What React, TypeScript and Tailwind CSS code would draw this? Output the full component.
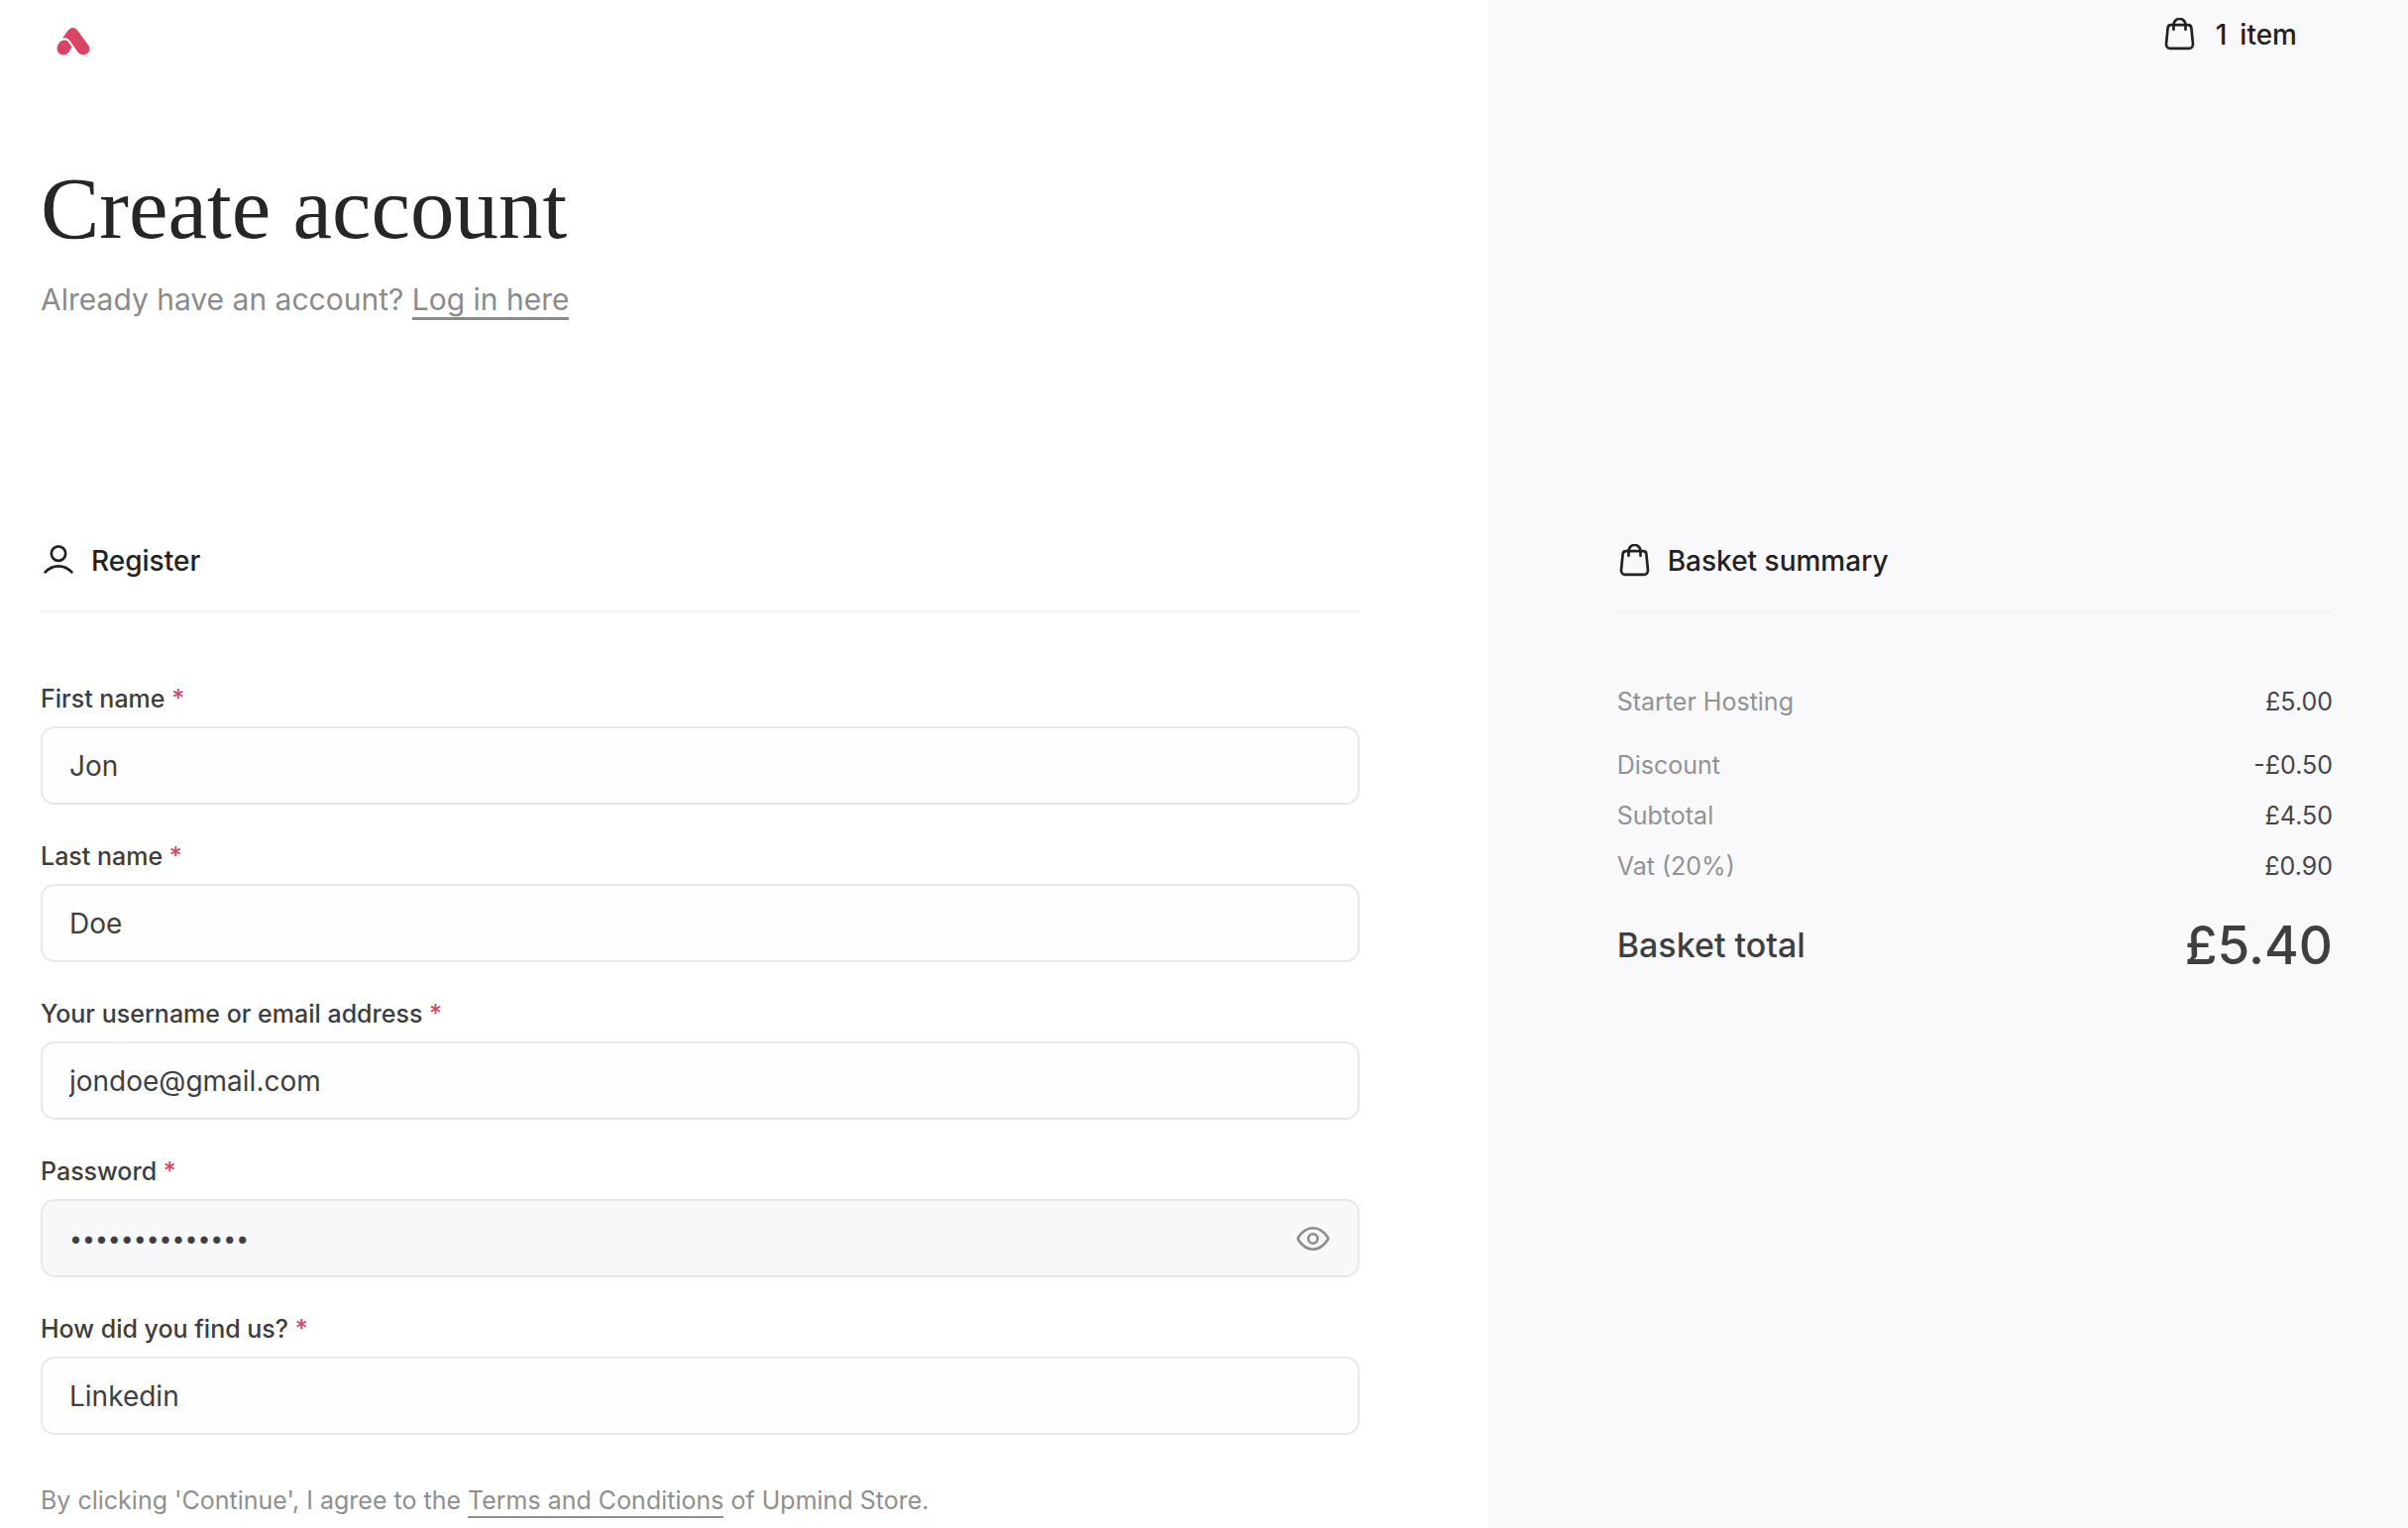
import { useState } from "react";

const fields = [
  { id: "firstName", label: "First name", type: "text", value: "Jon" },
  { id: "lastName", label: "Last name", type: "text", value: "Doe" },
  {
    id: "email",
    label: "Your username or email address",
    type: "email",
    value: "jondoe@gmail.com",
  },
  {
    id: "password",
    label: "Password",
    type: "password",
    value: "jondoe12345678",
  },
  { id: "source", label: "How did you find us?", type: "text", value: "Linkedin" },
];

const lines = [
  { label: "Discount", amount: "-£0.50" },
  { label: "Subtotal", amount: "£4.50" },
  { label: "Vat (20%)", amount: "£0.90" },
];

function Logo() {
  return (
    <svg className="w-[34px] h-[28px]" viewBox="0 0 34 28" fill="#db4565">
      <path d="M6 10.600 11.200 3.200Q16.500-3 21.800 3.200L32.600 18.200Q34.800 22 32 25.200 27 29.500 22 25.200L14.600 14.400Q11.400 9.400 6 10.600Z" />
      <path d="M1.400 17.600C3.600 12.200 10 10.800 12.600 15.200L15.600 19.600 12 25.200Q7 29.600 2.200 25.400-.6 22 1.400 17.600Z" />
    </svg>
  );
}

function BagIcon() {
  return (
    <svg
      className="w-[34px] h-[34px]"
      viewBox="0 0 34 34"
      fill="none"
      stroke="currentColor"
      strokeWidth="2.7"
      strokeLinecap="round"
      strokeLinejoin="round"
    >
      <path d="M9 7.200h17a3.400 3.400 0 0 1 3.400 3.100l1.600 16.200a4 4 0 0 1-4 4.400H8a4 4 0 0 1-4-4.400l1.600-16.200A3.400 3.400 0 0 1 9 7.200Z" />
      <path d="M11.500 11.800V7a6 6 0 0 1 12 0v4.800" />
    </svg>
  );
}

function UserIcon() {
  return (
    <svg
      className="w-[34px] h-[34px]"
      viewBox="0 0 34 34"
      fill="none"
      stroke="currentColor"
      strokeWidth="2.7"
      strokeLinecap="round"
    >
      <circle cx="18" cy="9.600" r="7.200" />
      <path d="M4.600 28.400C8.200 24.600 12.800 22.400 18 22.400s9.800 2.200 13.400 6" />
    </svg>
  );
}

function EyeIcon() {
  return (
    <svg
      className="w-[34px] h-[34px]"
      viewBox="0 0 34 34"
      fill="none"
      stroke="currentColor"
      strokeWidth="2.6"
      strokeLinejoin="round"
    >
      <path d="M2.200 15.800C6 10 11 6.300 17 6.300s11 3.700 14.800 9.500a2.200 2.200 0 0 1 0 2.400C28 24 23 27.700 17 27.700S6 24 2.200 18.200a2.200 2.200 0 0 1 0-2.400Z" />
      <circle cx="17" cy="17" r="4.700" />
    </svg>
  );
}

function Field({ id, label, type, value: initial }: (typeof fields)[number]) {
  const [value, setValue] = useState(initial);
  const [visible, setVisible] = useState(false);
  const isPassword = type === "password";

  return (
    <div className="flex flex-col gap-3">
      <label
        htmlFor={id}
        className="text-[25px] leading-[32px] font-medium text-[#3d3d3f]"
      >
        {label} <span className="text-[#d3486b]">*</span>
      </label>
      <div
        className={`flex items-center h-[79px] rounded-[14px] border-2 border-[#e8e8eb] pl-[27px] pr-7 ${
          isPassword ? "bg-[#f8f8fb]" : "bg-[#fefefe]"
        }`}
      >
        <input
          id={id}
          type={isPassword && visible ? "text" : type}
          value={value}
          onChange={(e) => setValue(e.target.value)}
          className={`flex-1 min-w-0 h-full bg-transparent outline-none text-[#3f3f41] ${
            isPassword && !visible ? "text-[23px]" : "text-[28px]"
          }`}
        />
        {isPassword && (
          <button
            type="button"
            aria-label="Show password"
            onClick={() => setVisible(!visible)}
            className="text-[#8c8c8f] cursor-pointer"
          >
            <EyeIcon />
          </button>
        )}
      </div>
    </div>
  );
}

export default function App() {
  return (
    <div className="grid grid-cols-[61.8%_1fr] min-h-screen bg-white font-['Inter',sans-serif]">
      <main className="pl-[41px] pr-[130px]">
        <header className="pt-7 pl-4">
          <a href="#" aria-label="Home" className="block w-fit">
            <Logo />
          </a>
        </header>
        <h1 className="mt-[102px] text-[89px] leading-[104px] text-[#262626] font-['Liberation_Serif',serif]">
          Create account
        </h1>
        <p className="mt-[18px] text-[30px] leading-[44px] text-[#8b8b8b]">
          Already have an account?{" "}
          <a
            href="#"
            className="inline-block leading-[36px] border-b-3 border-[#8b8b8b]"
          >
            Log in here
          </a>
        </p>
        <form onSubmit={(e) => e.preventDefault()}>
          <h2 className="flex items-center gap-[17px] mt-[218px] h-12 pb-[26px] box-content border-b-2 border-[#f2f2f5] text-[28px] font-medium text-[#222224]">
            <UserIcon />
            Register
          </h2>
          <div className="flex flex-col gap-9 mt-[71px]">
            {fields.map((field) => (
              <Field key={field.id} {...field} />
            ))}
          </div>
          <p className="mt-[50px] text-[25px] leading-[32px] text-[#8f8f8f]">
            By clicking 'Continue', I agree to the{" "}
            <a href="#" className="inline-block border-b-2 border-[#8f8f8f]">
              Terms and Conditions
            </a>{" "}
            of Upmind Store.
          </p>
        </form>
      </main>
      <aside className="bg-[#f9f9fc] pl-[130px] pr-[76px]">
        <div className="flex justify-end pt-4 pr-9">
          <button
            type="button"
            className="flex items-center gap-5 text-[28px] leading-[38px] font-medium text-[#222224] cursor-pointer"
          >
            <BagIcon />
            <span className="flex gap-[13px]">
              <span>1</span>
              <span>item</span>
            </span>
          </button>
        </div>
        <h2 className="flex items-center gap-[17px] mt-[488px] h-12 pb-[26px] box-content border-b-2 border-[#f2f2f5] text-[28px] font-medium text-[#222224]">
          <BagIcon />
          Basket summary
        </h2>
        <table className="w-full mt-[74px] text-[25px] leading-[32px]">
          <tbody>
            <tr>
              <th scope="row" className="pb-8 text-left font-normal text-[#929294]">
                Starter Hosting
              </th>
              <td className="pb-8 text-right text-[#454547]">£5.00</td>
            </tr>
            {lines.map((line) => (
              <tr key={line.label}>
                <th
                  scope="row"
                  className="pb-[19px] text-left font-normal text-[#929294]"
                >
                  {line.label}
                </th>
                <td className="pb-[19px] text-right text-[#454547]">
                  {line.amount}
                </td>
              </tr>
            ))}
            <tr className="font-medium text-[#3f3f41]">
              <th
                scope="row"
                className="pt-4 text-left text-[34px] leading-[58px] font-medium"
              >
                Basket total
              </th>
              <td className="pt-4 text-right text-[53px] leading-[58px]">
                £5.40
              </td>
            </tr>
          </tbody>
        </table>
      </aside>
    </div>
  );
}
